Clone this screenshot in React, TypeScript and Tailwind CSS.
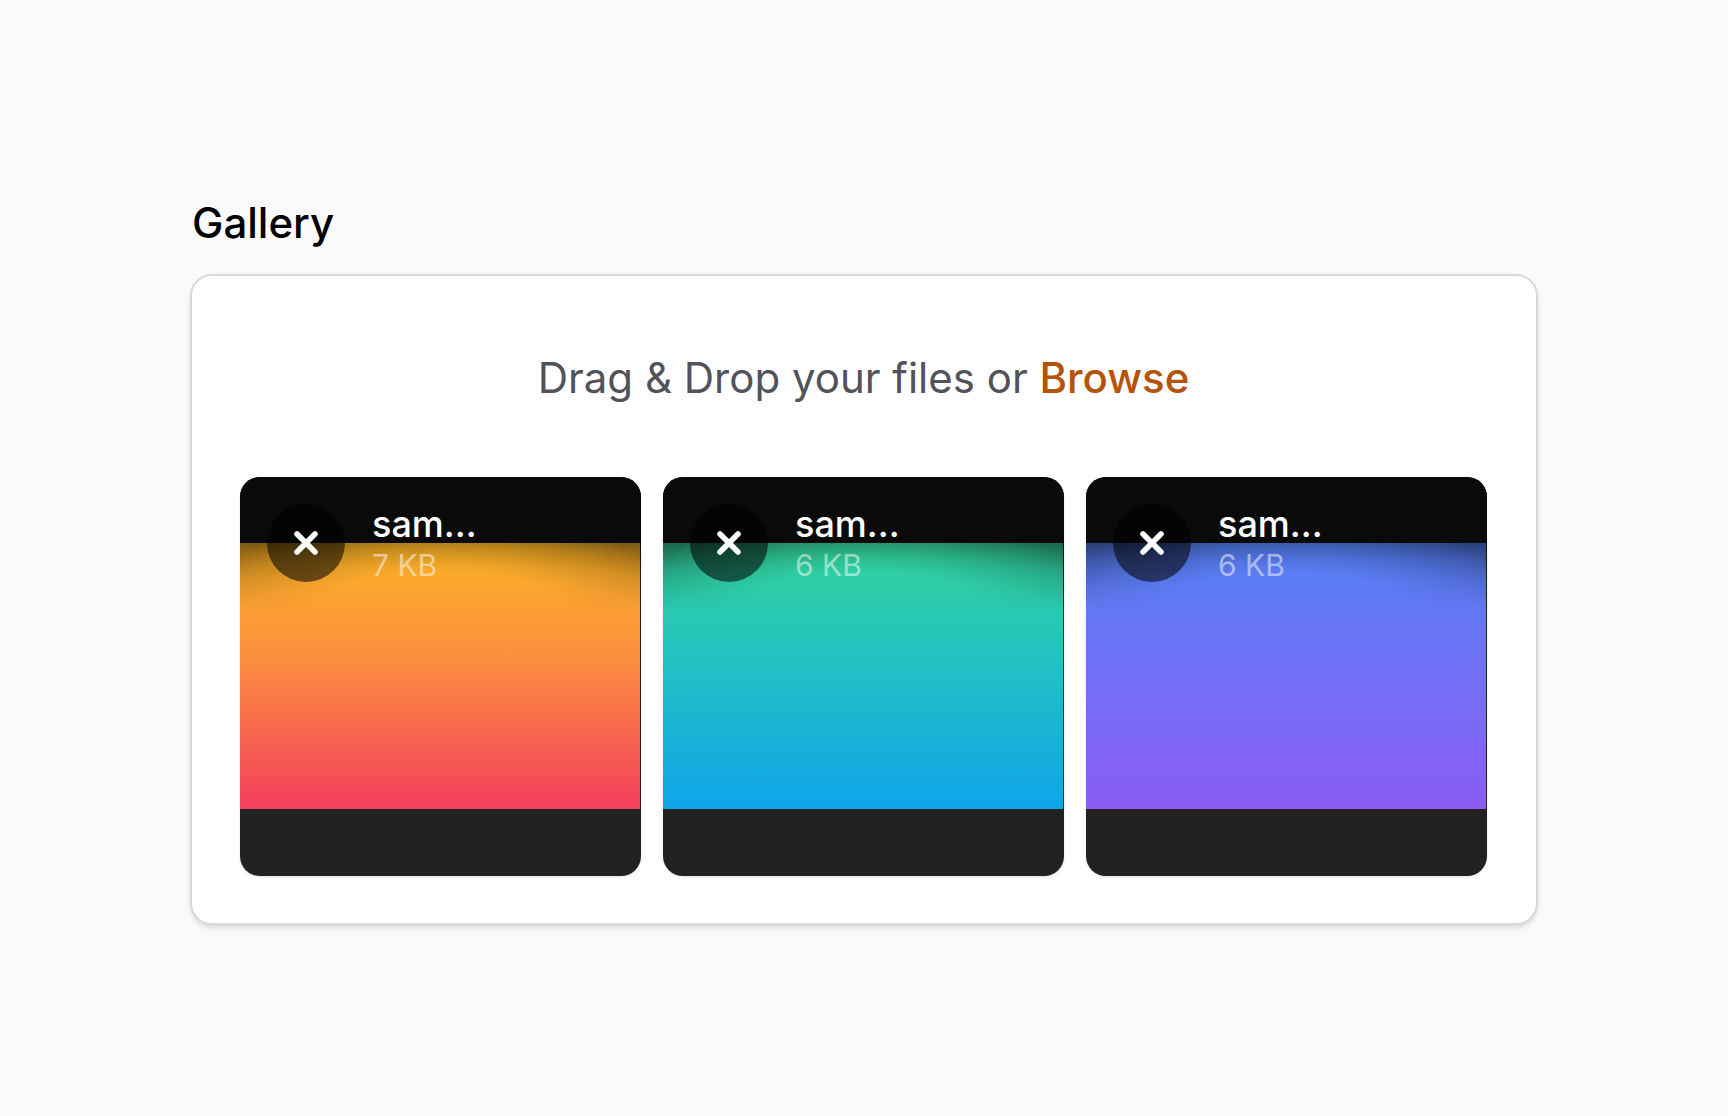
import React from 'react';

const files = [
  { size: '7 KB', image: 'bg-[linear-gradient(180deg,#fbb424_0%,#fb8f3e_42%,#f43f5e_100%)]' },
  { size: '6 KB', image: 'bg-[linear-gradient(180deg,#34d399_0%,#22c1c3_45%,#0ea5e9_100%)]' },
  { size: '6 KB', image: 'bg-[linear-gradient(180deg,#5580f3_0%,#6f72f6_45%,#8b5cf6_100%)]' },
];

const CloseIcon = () => (
  <svg width="26" height="26" viewBox="0 0 26 26" fill="none" stroke="white" strokeWidth="5.5" strokeLinecap="round">
    <path d="M4 4L22 22M22 4L4 22" />
  </svg>
);

const FileCard: React.FC<{ size: string; image: string }> = ({ size, image }) => (
  <div className="relative h-[399px] overflow-hidden rounded-[20px] bg-[#222222] shadow-sm">
    <div className="mt-[66px] h-[266px] border-r border-[#222222]">
      <div className={`h-full ${image}`} />
    </div>
    <div className="absolute inset-x-0 top-0 h-[66px] bg-[#0a0a0a]" />
    <div className="absolute inset-x-0 top-[66px] h-[70px] bg-[radial-gradient(ellipse_70%_130%_at_50%_100%,transparent_45%,rgba(0,0,0,0.5)_100%)] [mask-image:linear-gradient(black,transparent)]" />
    <div className="absolute left-[27px] top-[27px] flex gap-[27px]">
      <button className="flex h-[78px] w-[78px] items-center justify-center rounded-full bg-black/55">
        <CloseIcon />
      </button>
      <div className="flex flex-col">
        <span className="text-[36px] leading-[41px] font-medium text-white">sam...</span>
        <span className="text-[30px] leading-[41px] text-white/50">{size}</span>
      </div>
    </div>
  </div>
);

export default function App() {
  return (
    <div className="min-h-screen bg-[#fafafa] font-['Inter',sans-serif]">
      <div className="mx-auto w-[1348px] pt-[193px]">
        <h2 className="mb-[21px] pl-[2px] text-[42px] leading-[60px] font-medium text-black">Gallery</h2>
        <div className="rounded-[22px] border-2 border-[#d9d9d9] bg-white pt-[72px] pr-[49px] pb-[47px] pl-[48px] shadow-md">
          <p className="mb-[69px] text-center text-[42px] leading-[60px] text-[#52525b]">
            Drag &amp; Drop your files or <span className="font-medium text-[#b45309]">Browse</span>
          </p>
          <div className="grid grid-cols-3 gap-[22px]">
            {files.map((file, i) => (
              <FileCard key={i} size={file.size} image={file.image} />
            ))}
          </div>
        </div>
      </div>
    </div>
  );
}
